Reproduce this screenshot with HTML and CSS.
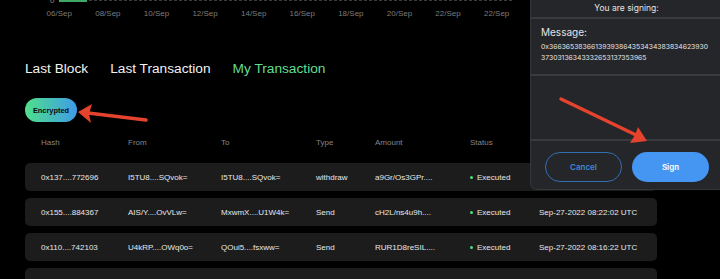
FILE: index.html
```html
<!DOCTYPE html>
<html lang="en">
<head>
  <meta charset="UTF-8" />
  <meta name="viewport" content="width=device-width, initial-scale=1.0"/>
  <title>My Transaction</title>
  <link rel="stylesheet" href="styles.css">
</head>
<body>
  <main class="page">
    <section class="chart">
      <div class="chart-axis">
        <span class="axis-zero">0</span>
        <div class="axis-line"><div class="axis-bar"></div></div>
      </div>
      <div class="chart-dates">
        <span>06/Sep</span><span>08/Sep</span><span>10/Sep</span><span>12/Sep</span><span>14/Sep</span>
        <span>16/Sep</span><span>18/Sep</span><span>20/Sep</span><span>22/Sep</span><span>22/Sep</span>
      </div>
    </section>

    <nav class="tabs">
      <a class="tab">Last Block</a>
      <a class="tab">Last Transaction</a>
      <a class="tab active">My Transaction</a>
    </nav>

    <div class="filters">
      <span class="pill">Encrypted</span>
    </div>

    <div class="tx-table">
      <div class="tx-row tx-head">
        <span>Hash</span><span>From</span><span>To</span><span>Type</span><span>Amount</span><span>Status</span><span></span>
      </div>
      <div class="tx-row">
        <span>0x137....772696</span><span>I5TU8....SQvok=</span><span>I5TU8....SQvok=</span><span>withdraw</span><span>a9Gr/Os3GPr....</span>
        <span class="status"><i class="dot"></i>Executed</span><span>Sep-27-2022 08:24:10 UTC</span>
      </div>
      <div class="tx-row">
        <span>0x155....884367</span><span>AIS/Y....OvVLw=</span><span>MxwmX....U1W4k=</span><span>Send</span><span>cH2L/ns4u9h....</span>
        <span class="status"><i class="dot"></i>Executed</span><span>Sep-27-2022 08:22:02 UTC</span>
      </div>
      <div class="tx-row">
        <span>0x110....742103</span><span>U4kRP....OWq0o=</span><span>QOui5....fsxww=</span><span>Send</span><span>RUR1D8reSIL....</span>
        <span class="status"><i class="dot"></i>Executed</span><span>Sep-27-2022 08:16:22 UTC</span>
      </div>
      <div class="tx-row">
        <span></span><span></span><span></span><span></span><span></span><span></span><span></span>
      </div>
    </div>
  </main>

  <!-- wallet signing popup, sits over the page -->
  <aside class="sign-popup">
    <div class="sign-title">You are signing:</div>
    <div class="sign-message">
      <div class="sign-label">Message:</div>
      <div class="sign-hex">0x36636538366139393864353434383834623930<br>37303136343332653137353965</div>
    </div>
    <div class="sign-space"></div>
    <div class="sign-actions">
      <button class="btn btn-cancel">Cancel</button>
      <button class="btn btn-sign">Sign</button>
    </div>
  </aside>

  <svg class="arrows" width="720" height="279" viewBox="0 0 720 279">
    <line x1="146" y1="120" x2="88" y2="113" stroke="#e5432d" stroke-width="3.5" stroke-linecap="round"/>
    <polygon points="78,112 92,104 89,114 91,123" fill="#e5432d"/>
    <line x1="561" y1="99" x2="636" y2="135" stroke="#e5432d" stroke-width="3.5" stroke-linecap="round"/>
    <polygon points="647,141 630,143 635,135 638,127" fill="#e5432d"/>
  </svg>
</body>
</html>
```

FILE: styles.css
```css
body {
  margin: 0;
  padding: 0;
  background-color: #000;
  font-family: 'Liberation Sans', Arial, sans-serif;
  color: #fff;
  width: 720px;
  height: 279px;
  overflow: hidden;
  position: relative;
}
.page {
  padding-left: 25px;
  width: 632px;
}
.chart {
  margin-top: -5px;
  margin-left: -25px;
}
.chart-axis {
  display: flex;
  align-items: center;
  height: 12px;
  padding-left: 50px;
}
.axis-zero {
  width: 9px;
  font-size: 8px;
  line-height: 8px;
  color: #8a8a8a;
}
.axis-line {
  position: relative;
  width: 453px;
  border-top: 1px dashed #3c3c3c;
  display: flex;
}
.axis-bar {
  width: 28px;
  height: 3px;
  margin-top: -2px;
  background-color: #3fa866;
}
.chart-dates {
  display: flex;
  margin-top: 2px;
  padding-left: 35px;
}
.chart-dates span {
  width: 48.6px;
  text-align: center;
  font-size: 8px;
  line-height: 10px;
  color: #7c7c7c;
}
.tabs {
  display: flex;
  gap: 22px;
  margin-top: 40px;
}
.tab {
  font-size: 13.7px;
  line-height: 20px;
  color: #f2f2f2;
}
.tab.active {
  color: #62de92;
}
.filters {
  margin-top: 19px;
  display: flex;
}
.pill {
  display: inline-flex;
  align-items: center;
  justify-content: center;
  width: 52px;
  height: 24px;
  border-radius: 12px;
  background: linear-gradient(90deg, #4fe08a 0%, #3f9be8 100%);
  color: #0b0b0b;
  font-size: 7.4px;
  font-weight: bold;
}
.tx-table {
  display: flex;
  flex-direction: column;
  gap: 7px;
  margin-top: 14px;
}
.tx-row {
  display: grid;
  grid-template-columns: 87px 93px 95px 59px 95px 69px 1fr;
  align-items: center;
  height: 28px;
  padding-left: 16px;
  border-radius: 5px;
  background-color: #1c1c1d;
  font-size: 8px;
  color: #e8e8e8;
  white-space: nowrap;
}
.tx-head {
  height: 12px;
  background: none;
  color: #858585;
  margin-bottom: 8px;
}
.status {
  display: flex;
  align-items: center;
  gap: 4px;
}
.dot {
  width: 3px;
  height: 3px;
  border-radius: 50%;
  background-color: #4ade80;
}
.sign-popup {
  position: absolute;
  top: 0;
  right: -2px;
  width: 191px;
  height: 189px;
  background-color: #25262a;
  border-left: 1px solid #35363a;
  border-bottom: 1px solid #35363a;
  border-bottom-left-radius: 7px;
  font-family: Inter, 'Noto Sans', sans-serif;
  display: flex;
  flex-direction: column;
}
.sign-title {
  height: 17px;
  line-height: 16px;
  text-align: center;
  font-size: 8.5px;
  color: #e4e4e4;
  border-bottom: 2px solid #3a3b3f;
}
.sign-message {
  height: 48px;
  padding: 7px 10px 0;
  border-bottom: 2px solid #3a3b3f;
}
.sign-label {
  font-size: 10px;
  line-height: 12px;
  color: #e4e4e4;
  margin-bottom: 3px;
}
.sign-hex {
  font-size: 6.8px;
  line-height: 11px;
  color: #e4e4e4;
}
.sign-space {
  height: 63px;
  border-bottom: 2px solid #3a3b3f;
}
.sign-actions {
  display: flex;
  gap: 10px;
  padding: 11px 0 0 14px;
}
.btn {
  width: 77px;
  height: 30px;
  border-radius: 15px;
  font-family: Inter, 'Noto Sans', sans-serif;
  font-size: 8px;
  font-weight: 600;
  cursor: pointer;
}
.btn-cancel {
  background: none;
  border: 1px solid #2f6fb4;
  color: #3f86d6;
}
.btn-sign {
  background-color: #4596f2;
  border: none;
  color: #fff;
}
.arrows {
  position: absolute;
  top: 0;
  left: 0;
  pointer-events: none;
}
```
